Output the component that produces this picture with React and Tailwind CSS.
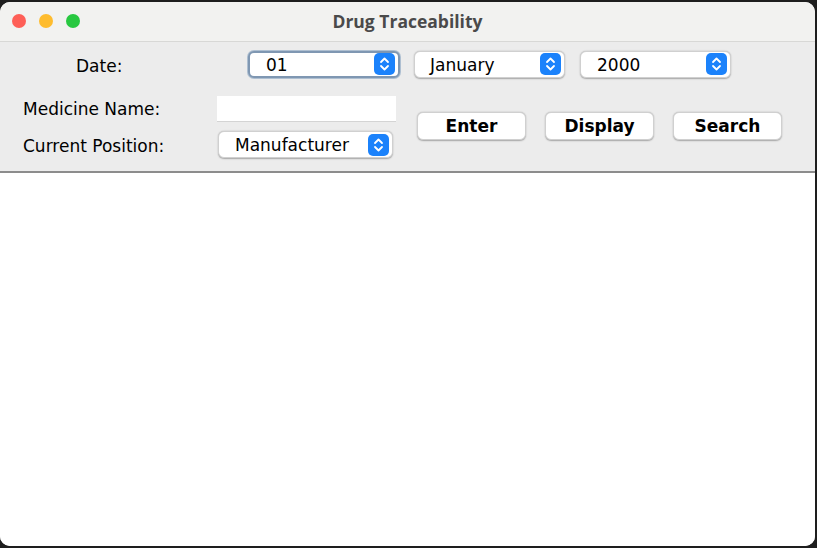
import React from "react";

const font = { fontFamily: '"DejaVu Sans", "Liberation Sans", sans-serif' };

function Arrows() {
  return (
    <div className="w-[21px] h-[22px] rounded-[5px] bg-[#1b82fb] flex items-center justify-center">
      <svg width="11" height="16" viewBox="0 0 11 16" fill="none" stroke="white" strokeWidth="1.8" strokeLinecap="round" strokeLinejoin="round">
        <path d="M2 6 L5.5 2.5 L9 6" />
        <path d="M2 10 L5.5 13.5 L9 10" />
      </svg>
    </div>
  );
}

function Combo({ text, w, focused, pl }) {
  return (
    <div
      className={
        "h-[27px] rounded-[6px] bg-white flex items-center justify-between pr-[3px] " +
        (focused
          ? "border-2 border-[#7f97b2] shadow-[0_0_0_1px_#aebfd1]"
          : "shadow-[0_0.5px_1.5px_rgba(0,0,0,0.3)] border-[0.5px] border-[#d0d0d0]")
      }
      style={{ width: w, paddingLeft: pl }}
    >
      <span className="text-[17px] text-black leading-none pt-[2px]">{text}</span>
      <Arrows />
    </div>
  );
}

function Btn({ children }) {
  return (
    <div className="w-[109px] h-[28px] rounded-[6px] bg-white border-[0.5px] border-[#d0d0d0] shadow-[0_0.5px_1.5px_rgba(0,0,0,0.3)] flex items-center justify-center text-[17px] font-bold text-black pt-[2px]">
      {children}
    </div>
  );
}

export default function App() {
  return (
    <div className="w-[817px] h-[548px] bg-[#1e1e1e] pt-[2px] pr-[2px] pb-[2px]" style={font}>
      <div className="w-full h-full rounded-[10px] overflow-hidden flex flex-col bg-white">
        <div className="h-[40px] bg-[#f2f2f0] border-b border-[#d8d8d6] relative flex items-center justify-center shrink-0">
          <div className="absolute left-[12px] top-[12px] flex gap-[13px]">
            <div className="w-[14px] h-[14px] rounded-full bg-[#fe5f57]" />
            <div className="w-[14px] h-[14px] rounded-full bg-[#febc2e]" />
            <div className="w-[14px] h-[14px] rounded-full bg-[#28c840]" />
          </div>
          <span className="text-[17.5px] font-bold text-[#4a4a4a]" style={{ fontFamily: '"Open Sans", "Liberation Sans", sans-serif' }}>
            Drug Traceability
          </span>
        </div>
        <div className="h-[131px] bg-[#ececec] border-b-2 border-[#8c8c8c] shrink-0 flex flex-col">
          <div className="flex items-center mt-[8px] h-[28px]">
            <span className="ml-[76px] w-[172px] text-[17px] text-black pt-[5px]">Date:</span>
            <Combo text="01" w={152} focused pl={16} />
            <div className="w-[14px]" />
            <Combo text="January" w={151} pl={15} />
            <div className="w-[15px]" />
            <Combo text="2000" w={151} pl={16} />
          </div>
          <div className="flex mt-[17px]">
            <div className="flex flex-col">
              <div className="flex items-center h-[27px]">
                <span className="ml-[23px] w-[194px] text-[17px] text-black pt-[3px]">Medicine Name:</span>
                <div className="w-[179px] h-[26px] bg-white border-b border-[#d4d4d4]" />
              </div>
              <div className="flex items-center h-[27px] mt-[9px]">
                <span className="ml-[23px] w-[195px] text-[17px] text-black pt-[5px]">Current Position:</span>
                <Combo text="Manufacturer" w={175} pl={16} />
              </div>
            </div>
            <div className="flex gap-[19px] ml-[21px] mt-[17px] h-[28px]">
              <Btn>Enter</Btn>
              <Btn>Display</Btn>
              <Btn>Search</Btn>
            </div>
          </div>
        </div>
        <div className="flex-1 bg-white" />
      </div>
    </div>
  );
}
